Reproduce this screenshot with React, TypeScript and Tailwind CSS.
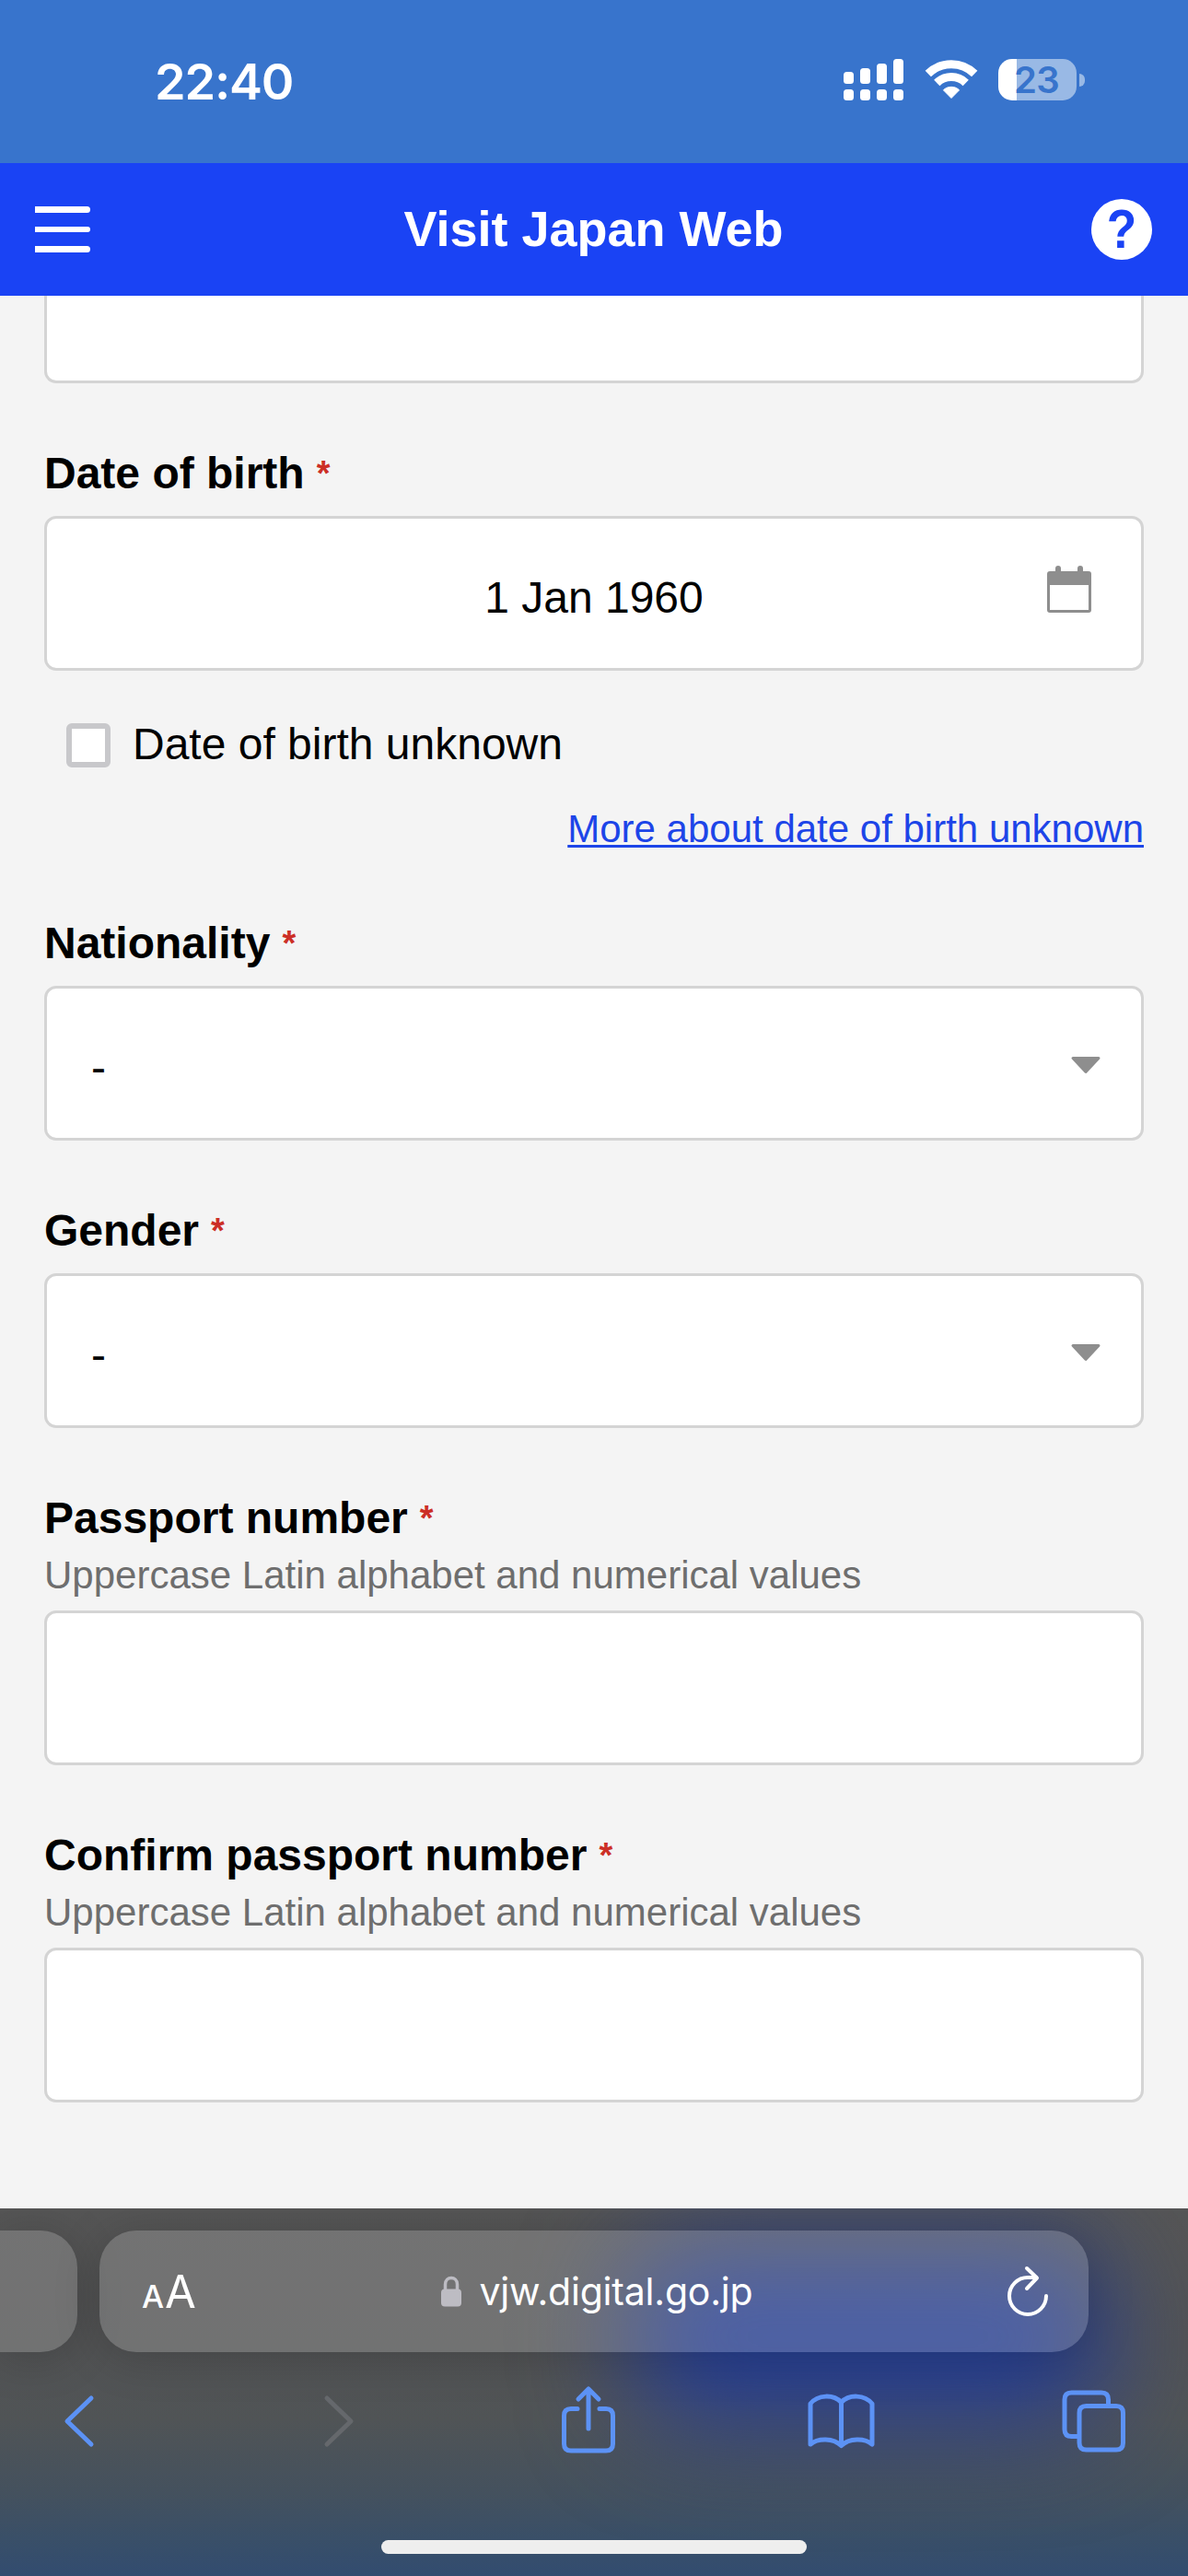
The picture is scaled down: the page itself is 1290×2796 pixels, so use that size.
import { ReactNode } from "react";

const boxClass =
  "h-[168px] w-full rounded-[13px] border-[3px] border-[#d4d4d4] bg-white";

function Field({
  label,
  hint,
  children,
}: {
  label: string;
  hint?: string;
  children?: ReactNode;
}) {
  return (
    <div className="pt-[67px]">
      <div className="flex h-[62px] items-center text-[48px] leading-[62px] font-bold text-black">
        <span>{label}</span>
        <span className="ml-[13px] pb-px text-[38px] text-[#cc2f26]">*</span>
      </div>
      {hint ? (
        <p className="mt-1 mb-[11px] text-[42px] leading-[54px] text-[#6e6e6e]">
          {hint}
        </p>
      ) : (
        <div className="h-[15px]" />
      )}
      {children ?? <div className={boxClass} />}
    </div>
  );
}

function SelectBox() {
  return (
    <div className={`${boxClass} flex justify-between pt-[56px] pr-[43px] pl-[48px]`}>
      <span className="text-[48px] leading-[60px]">-</span>
      <svg width="34" height="20" viewBox="0 0 34 20" className="mt-[17px]">
        <path
          d="M3 2.500h28L17 17.500z"
          fill="#8e8e8e"
          stroke="#8e8e8e"
          strokeWidth="3"
          strokeLinejoin="round"
        />
      </svg>
    </div>
  );
}

function StatusBar() {
  return (
    <div className="flex h-[177px] justify-between bg-[#3874cc] pt-[64px] pr-[112px] pl-[168px] text-white">
      <span className="font-[Inter,sans-serif] text-[54px] leading-[49px] font-semibold tracking-[-1.2px]">
        22:40
      </span>
      <div className="flex items-start">
        <svg width="66" height="46" viewBox="0 0 66 46" fill="white">
          <rect x="0" y="14" width="11" height="13" rx="3.500" />
          <rect x="18" y="10" width="11" height="17" rx="3.500" />
          <rect x="36" y="5" width="11" height="22" rx="3.500" />
          <rect x="54" y="0" width="11" height="27" rx="3.500" />
          <rect x="0" y="33" width="11" height="12" rx="3.500" />
          <rect x="18" y="33" width="11" height="12" rx="3.500" />
          <rect x="36" y="33" width="11" height="12" rx="3.500" />
          <rect x="54" y="33" width="11" height="12" rx="3.500" />
        </svg>
        <svg width="58" height="44" viewBox="0 0 58 44" className="ml-[22px]">
          <g fill="none" stroke="white" strokeWidth="9">
            <path d="M3.800 16A36 36 0 0 1 54.200 16" />
            <path d="M13.300 26A22.500 22.500 0 0 1 44.700 26" />
          </g>
          <path
            d="M29 42.500L20.400 33.800C25 29.200 33 29.200 37.600 33.800z"
            fill="white"
            stroke="white"
            strokeWidth="1"
            strokeLinejoin="round"
          />
        </svg>
        <div className="ml-[22px] flex items-center">
          <div className="flex h-[45px] w-[85px] items-center justify-center rounded-[15px] bg-[linear-gradient(to_right,#fff_20px,#99b9e5_20px)]">
            <span className="pr-[2px] font-[Inter,sans-serif] text-[40px] leading-[45px] font-semibold tracking-[-0.8px] text-[#3874cc]">
              23
            </span>
          </div>
          <div className="ml-[3px] h-[14px] w-[6px] rounded-r-full bg-[#99b9e5]" />
        </div>
      </div>
    </div>
  );
}

function NavBar() {
  return (
    <div className="flex h-[144px] items-center justify-between bg-[#1a43f4] pr-[39px] pl-[38px] text-white">
      <div className="flex w-[66px] flex-col gap-[15px]">
        <div className="h-[6.500px] w-[60px] rounded-r-full bg-white" />
        <div className="h-[6.500px] w-[60px] rounded-r-full bg-white" />
        <div className="h-[6.500px] w-[60px] rounded-r-full bg-white" />
      </div>
      <h1 className="pb-[3px] text-[54px] leading-[64px] font-bold">Visit Japan Web</h1>
      <div className="flex size-[66px] items-center justify-center rounded-full bg-white text-[59px] leading-[66px] font-bold text-[#1a43f4]">
        <span className="inline-block scale-x-90">?</span>
      </div>
    </div>
  );
}

function BrowserBar() {
  return (
    <div className="relative h-[399px] overflow-hidden bg-[linear-gradient(#555555_0px,#525354_150px,#505456_230px,#44515e_310px,#394f68_360px,#324c70_399px)]">
      {/* page colours bleeding through the toolbar */}
      <div className="absolute top-[44px] left-[685px] h-[190px] w-[515px] rounded-[60px] bg-[#243d94] blur-[58px]" />
      <div className="relative pt-[24px]">
        <div className="flex gap-[24px]">
          <div className="h-[132px] w-[84px] rounded-r-[40px] bg-white/18 shadow-[0_6px_50px_rgba(0,0,0,0.18)]" />
          <div className="flex h-[132px] w-[1074px] items-center justify-between rounded-[40px] bg-white/18 pr-[42px] pl-[46px] text-white shadow-[0_6px_50px_rgba(0,0,0,0.18)]">
            <div className="flex w-[50px] items-baseline gap-px pt-[7px] font-[Inter,sans-serif] leading-[60px]">
              <span className="text-[34px] font-medium">A</span>
              <span className="text-[49px]">A</span>
            </div>
            <div className="flex items-center">
              <svg width="22" height="34" viewBox="0 0 22 34">
                <path
                  d="M4.500 16V9.500C4.500 0 17.500 0 17.500 9.500V16"
                  fill="none"
                  stroke="#bdbcc3"
                  strokeWidth="3.500"
                />
                <rect x="0" y="14.500" width="22" height="19" rx="4" fill="#bdbcc3" />
              </svg>
              <span className="ml-[20px] font-[Inter,sans-serif] text-[41px] leading-[56px] tracking-[-0.2px]">
                vjw.digital.go.jp
              </span>
            </div>
            <svg
              width="48"
              height="58"
              viewBox="0 0 48 58"
              fill="none"
              stroke="white"
              strokeWidth="4"
              strokeLinecap="round"
              strokeLinejoin="round"
            >
              <path d="M44 34A20 20 0 1 1 24 14H33" />
              <path d="M23 4L34 14.500L23 26" />
            </svg>
          </div>
        </div>
        <div className="mt-[36px] flex h-[78px] items-center pl-[67px]">
          <Icon d="M32 6L6 31L32 56" width={38} height={62} color="#5c92f5" />
          <div className="w-[244px]" />
          <Icon d="M6 6L32 31L6 56" width={38} height={62} color="#65686c" />
          <div className="w-[220px]" />
          <Icon
            d="M20 27.500H13Q5.500 27.500 5.500 35V65.500Q5.500 73 13 73H51Q58.500 73 58.500 65.500V35Q58.500 27.500 51 27.500H44M32 49V7M21 17L32 6L43 17"
            width={64}
            height={82}
            color="#5c92f5"
          />
          <div className="w-[203px]" />
          <Icon
            d="M39.500 12.500C31 3.500 14 4 6 14V58C14 51 31 51 39.500 59.500C48 51 65 51 73 58V14C65 4 48 3.500 39.500 12.500V59"
            width={79}
            height={66}
            color="#5c92f5"
          />
          <div className="w-[198px]" />
          <Icon
            d="M20 52.500H12.500Q5 52.500 5 45V12.500Q5 5 12.500 5H45Q52.500 5 52.500 12.500V18M28.500 19.500H61Q68.500 19.500 68.500 27V59.500Q68.500 67 61 67H28.500Q21 67 21 59.500V27Q21 19.500 28.500 19.500Z"
            width={74}
            height={72}
            color="#5c92f5"
          />
        </div>
        <div className="mx-auto mt-[90px] h-[15px] w-[462px] rounded-full bg-[#eeeeee]" />
      </div>
    </div>
  );
}

function Icon({
  d,
  width,
  height,
  color,
}: {
  d: string;
  width: number;
  height: number;
  color: string;
}) {
  return (
    <svg
      width={width}
      height={height}
      viewBox={`0 0 ${width} ${height}`}
      className="shrink-0"
    >
      <path
        d={d}
        fill="none"
        stroke={color}
        strokeWidth="5"
        strokeLinecap="round"
        strokeLinejoin="round"
      />
    </svg>
  );
}

export default function App() {
  return (
    <div className="flex h-[2796px] w-[1290px] flex-col overflow-hidden bg-[#f4f4f4] font-['Liberation_Sans',Arial,sans-serif] text-black">
      <StatusBar />
      <NavBar />
      <main className="flex-1 px-[48px]">
        <div className="h-[95px] w-full rounded-b-[13px] border-[3px] border-t-0 border-[#d4d4d4] bg-white" />

        <Field label="Date of birth">
          <div className={`${boxClass} flex items-start pr-[54px] pl-[102px]`}>
            <span className="flex-1 pt-[56px] text-center text-[48px] leading-[60px]">
              1 Jan 1960
            </span>
            <svg
              width="48"
              height="52"
              viewBox="0 0 48 52"
              fill="#8e8e8e"
              className="mt-[51px]"
            >
              <rect x="9" y="0" width="6" height="12" rx="3" />
              <rect x="33" y="0" width="6" height="12" rx="3" />
              <path
                fillRule="evenodd"
                d="M3 6H45Q48 6 48 9V48Q48 51 45 51H3Q0 51 0 48V9Q0 6 3 6ZM3 21V48H45V21Z"
              />
            </svg>
          </div>
        </Field>
        <div className="mt-[51px] flex h-[60px] items-center pl-[24px]">
          <div className="size-[48px] rounded-[6px] border-[6px] border-[#c8c8cb] bg-white" />
          <span className="ml-[24px] pb-[2px] text-[48px] leading-[60px]">
            Date of birth unknown
          </span>
        </div>
        <div className="mt-[34px] flex h-[53px] justify-end">
          <a className="text-[42px] leading-[54px] text-[#1d45e8] underline decoration-[3px] underline-offset-[3px] [text-decoration-skip-ink:none]">
            More about date of birth unknown
          </a>
        </div>

        <Field label="Nationality">
          <SelectBox />
        </Field>
        <Field label="Gender">
          <SelectBox />
        </Field>
        <Field
          label="Passport number"
          hint="Uppercase Latin alphabet and numerical values"
        />
        <Field
          label="Confirm passport number"
          hint="Uppercase Latin alphabet and numerical values"
        />
      </main>
      <BrowserBar />
    </div>
  );
}
